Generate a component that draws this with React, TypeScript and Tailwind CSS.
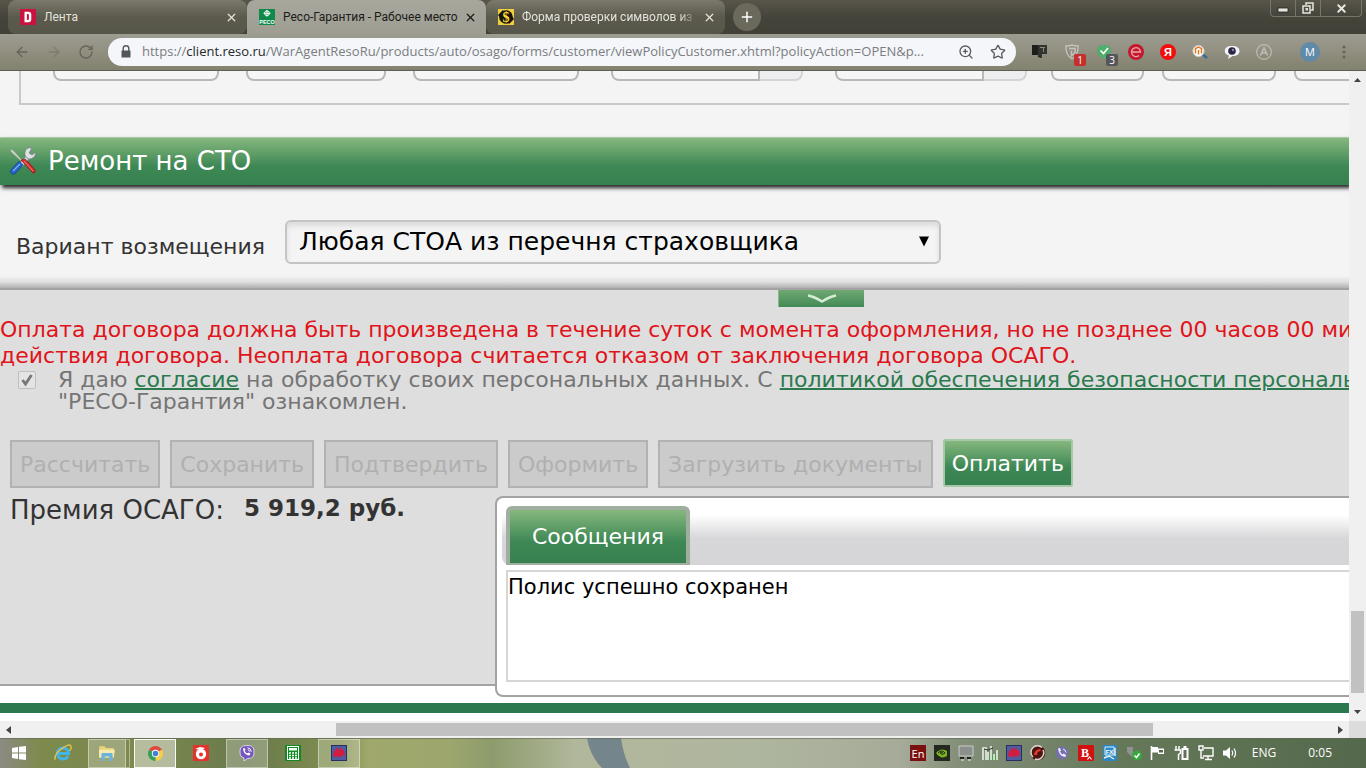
import React from "react";
import { ArrowLeft, ArrowRight, RotateCw, ZoomIn, Star, X, Plus } from "lucide-react";

type Kids = { children?: React.ReactNode };

function Ico({ children, size = 16 }: Kids & { size?: number }) {
  return (
    <svg width={size} height={size} viewBox="0 0 16 16" fill="none" aria-hidden="true" className="block shrink-0">
      {children}
    </svg>
  );
}

/* ---------- browser tabs ---------- */

function Tab({ icon, title, active, fade }: { icon: React.ReactNode; title: string; active?: boolean; fade?: boolean }) {
  return (
    <div
      className={
        active
          ? "flex h-[38px] w-[239px] shrink-0 items-center rounded-t-lg bg-linear-to-b from-[#a8a79d] to-[#9d9c91] pb-1 pl-3 pr-2 text-[#1c1c18]"
          : "flex h-[34px] w-[239px] shrink-0 items-center rounded-lg bg-linear-to-b from-[#7b796c] via-[#5b5a4c] to-[#57564a] pl-3 pr-2 text-[#e4e3dc]"
      }
    >
      {icon}
      <span
        className={
          fade
            ? "ml-2 min-w-0 flex-1 overflow-hidden whitespace-nowrap mask-r-from-90% font-[Roboto,sans-serif] text-xs"
            : "ml-2 min-w-0 flex-1 overflow-hidden whitespace-nowrap font-[Roboto,sans-serif] text-xs"
        }
      >
        {title}
      </span>
      <button aria-label="Закрыть вкладку" className="ml-1 flex size-4 items-center justify-center">
        <X size={13} strokeWidth={2.4} />
      </button>
    </div>
  );
}

function DIcon() {
  return (
    <Ico>
      <rect width="16" height="16" fill="#c9123f" />
      <path d="M4.5 2.8h3.8q3 0 3 3v4.4q0 3-3 3H4.500zM6.900 5v6h1q1 0 1-1V6q0-1-1-1z" fill="#fff" fillRule="evenodd" />
    </Ico>
  );
}

function ResoIcon() {
  return (
    <Ico>
      <rect width="16" height="16" fill="#0e8a4a" />
      <circle cx="8" cy="4.300" r="2.400" stroke="#fff" strokeWidth="1" />
      <path d="M8 1v6.600M4.500 4.300h7" stroke="#fff" strokeWidth="1" />
      <text x="8" y="14.500" textAnchor="middle" fontSize="5.500" fontWeight="700" fill="#fff" fontFamily="Liberation Sans, sans-serif">
        РЕСО
      </text>
    </Ico>
  );
}

function DollarIcon() {
  return (
    <Ico>
      <rect width="16" height="16" fill="#f0cf3c" />
      <circle cx="8" cy="8" r="6.800" fill="#17130a" />
      <path d="M0 6l5-5 1 4-3 5zM16 10l-5 5-1-4 3-5z" fill="#17130a" />
      <text x="8" y="13" textAnchor="middle" fontSize="14" fontWeight="700" fill="#ffd93b" fontFamily="Liberation Serif, serif">
        $
      </text>
    </Ico>
  );
}

function TabStrip() {
  return (
    <div className="flex h-[34px] shrink-0 items-start bg-linear-to-b from-[#58564b] via-[#45443a] to-[#424138] pl-2">
      <Tab icon={<DIcon />} title="Лента" />
      <Tab icon={<ResoIcon />} title="Ресо-Гарантия - Рабочее место" active />
      <Tab icon={<DollarIcon />} title="Форма проверки символов из д" fade />
      <button aria-label="Новая вкладка" className="ml-2 mt-[3px] flex size-7 items-center justify-center rounded-full bg-[#6a695c] text-white">
        <Plus size={16} strokeWidth={2.200} />
      </button>
      <div className="ml-auto mr-1 flex h-[17px] rounded-b-sm border border-t-0 border-[#77766b] text-[#e8e8e2]">
        <button aria-label="Свернуть" className="flex w-6 items-center justify-center">
          <svg width="12" height="12" viewBox="0 0 12 12"><rect x="1" y="6" width="10" height="4" fill="#e6e6df" stroke="#222" strokeWidth=".8" /></svg>
        </button>
        <button aria-label="Восстановить" className="flex w-[26px] items-center justify-center border-x border-[#77766b]">
          <svg width="12" height="12" viewBox="0 0 12 12" fill="none" stroke="#e6e6df" strokeWidth="1.500"><path d="M4 3V1h7v7H9" /><rect x="1" y="4" width="7" height="7" /><rect x="4" y="6.500" width="1.500" height="1.500" strokeWidth="1" /></svg>
        </button>
        <button aria-label="Закрыть" className="flex w-[40px] items-center justify-center">
          <X size={13} strokeWidth={3.500} />
        </button>
      </div>
    </div>
  );
}

/* ---------- toolbar ---------- */

function Extensions() {
  return (
    <div className="flex shrink-0 items-center gap-4 pl-4">
      <Ico>
        <path d="M0 1h9v13l-3-1v-2H0z" fill="#1d1d1b" />
        <path d="M6 1h9v9h-5v4L6 12z" fill="#34342f" />
        <path d="M8 3.500h5M11.500 4v4" stroke="#8b8a80" />
      </Ico>
      <span className="relative">
        <Ico>
          <path d="M8 .8c2 1 4 1.300 6.200 1.200 0 6-1 10-6.200 13C2.800 12 1.800 8 1.800 2 4 2.100 6 1.800 8 .8z" stroke="#c3c3bb" strokeWidth="1.300" />
          <path d="M5 4.500h6v4L7.500 12V6.500" stroke="#c3c3bb" strokeWidth="1.500" />
        </Ico>
        <span className="absolute left-2.5 top-2.5 flex h-3 w-3 items-center justify-center rounded-xs bg-[#c5302c] text-[10px] leading-3 text-white">1</span>
      </span>
      <span className="relative">
        <Ico>
          <path d="M1 6Q1 1 8 1t7 5q0 6-7 9-7-3-7-9z" fill="#4fae6a" />
          <path d="M4.500 6.500L7.500 9.500 12 4" stroke="#fff" strokeWidth="1.600" />
        </Ico>
        <span className="absolute left-2.5 top-2.5 flex h-3 w-3 items-center justify-center rounded-xs bg-[#55565a] text-[10px] leading-3 text-white">3</span>
      </span>
      <Ico>
        <circle cx="8" cy="8" r="8" fill="#c3182d" />
        <path d="M3.500 8H12.500A4.500 4.500 0 1 0 11 11.500" stroke="#eda6a8" strokeWidth="1.300" />
      </Ico>
      <Ico>
        <circle cx="8" cy="8" r="8" fill="#f40d0d" />
        <text x="8" y="12" textAnchor="middle" fontSize="11" fontWeight="700" fill="#fff" fontFamily="Liberation Sans, sans-serif">Я</text>
      </Ico>
      <Ico>
        <path d="M10 10l5 4" stroke="#35699c" strokeWidth="2.400" />
        <circle cx="6.500" cy="7" r="5.600" fill="#fff" stroke="#cfcdc4" />
        <path d="M3.500 9.500v-5l3-1.500 3 1.500v5M6.500 10.500V6" stroke="#e07b28" strokeWidth="1.500" />
      </Ico>
      <Ico>
        <path d="M8 2c5 0 7.500 2 7.500 5S13 12 8.500 12L4 15l1-3.500C2 11 .8 9 .8 7 .8 4 3 2 8 2z" fill="#f3f3f5" />
        <circle cx="8" cy="7" r="3.800" fill="#2a2748" />
        <circle cx="9" cy="6" r="1.200" fill="#8b87a8" />
      </Ico>
      <Ico>
        <circle cx="8" cy="8" r="7.300" stroke="#bdbcb3" strokeWidth="1.200" />
        <path d="M4.500 11.500L8 4l3.500 7.500M6 9h4" stroke="#bdbcb3" strokeWidth="1.700" />
      </Ico>
      <div className="ml-3 flex size-5 items-center justify-center rounded-full bg-[#5f8aa8] text-[11px] text-white">М</div>
      <svg width="16" height="16" viewBox="0 0 16 16" fill="#66655a" aria-hidden="true"><circle cx="8" cy="3" r="1.600" /><circle cx="8" cy="8" r="1.600" /><circle cx="8" cy="13" r="1.600" /></svg>
    </div>
  );
}

function Toolbar() {
  return (
    <div className="flex h-[37px] shrink-0 items-center border-b border-[#5f5e52] bg-linear-to-b from-[#9d9c91] to-[#83826f] pr-3.5">
      <div className="flex w-[108px] items-center gap-4 pl-3.5 text-[#65645a]">
        <button aria-label="Назад"><ArrowLeft size={16} strokeWidth={2} /></button>
        <button aria-label="Вперёд" className="text-[#7d7c70]"><ArrowRight size={16} strokeWidth={2} /></button>
        <button aria-label="Обновить"><RotateCw size={16} strokeWidth={2} /></button>
      </div>
      <div className="flex h-7 min-w-0 flex-1 items-center rounded-full bg-[#f4f6f9] px-2.5 text-[#5a5b5e]">
        <Ico>
          <path d="M4 6.500h8q.5 0 .5.5v6.500H3.500V7q0-.5.5-.5z" fill="#55565a" />
          <path d="M5.200 7V4.500a2.800 2.800 0 0 1 5.600 0V7" stroke="#55565a" strokeWidth="1.400" />
        </Ico>
        <div className="ml-2 min-w-0 flex-1 overflow-hidden text-ellipsis whitespace-nowrap text-[13px] text-[#7a7c80]">
          https://<span className="text-[#26272a]">client.reso.ru</span>/WarAgentResoRu/products/auto/osago/forms/customer/viewPolicyCustomer.xhtml?policyAction=OPEN&amp;p...
        </div>
        <button aria-label="Масштаб" className="ml-3"><ZoomIn size={16} strokeWidth={2} /></button>
        <button aria-label="В закладки" className="ml-4"><Star size={16} strokeWidth={2} /></button>
      </div>
      <Extensions />
    </div>
  );
}

/* ---------- page ---------- */

const inputBox = "h-[10px] shrink-0 rounded-b-lg border-2 border-t-0 border-[#b9b9b9] bg-[#f6f6f6]";

function InputRow() {
  return (
    <div className="ml-[19px] flex h-[34px] shrink-0 border-b-2 border-l-2 border-[#c9c9c9] pl-8">
      <input aria-label="Поле 1" className={inputBox + " mr-[27px] w-[166px]"} />
      <input aria-label="Поле 2" className={inputBox + " mr-[27px] w-[140px]"} />
      <input aria-label="Поле 3" className={inputBox + " mr-8 w-[166px]"} />
      <input aria-label="Дата 1" className="h-[10px] w-[149px] shrink-0 rounded-bl-lg border-2 border-t-0 border-[#b9b9b9] bg-[#f6f6f6]" />
      <button aria-label="Календарь 1" className="mr-8 h-[10px] w-[43px] shrink-0 rounded-br-lg border-2 border-l-0 border-t-0 border-[#d4d4d6] bg-[#eeeef1]" />
      <input aria-label="Дата 2" className="h-[10px] w-[149px] shrink-0 rounded-bl-lg border-2 border-t-0 border-[#b9b9b9] bg-[#f6f6f6]" />
      <button aria-label="Календарь 2" className="mr-6 h-[10px] w-[43px] shrink-0 rounded-br-lg border-2 border-l-0 border-t-0 border-[#d4d4d6] bg-[#eeeef1]" />
      <input aria-label="Поле 4" className={inputBox + " mr-[18px] w-[93px]"} />
      <input aria-label="Поле 5" className={inputBox + " mr-[18px] w-[114px]"} />
      <input aria-label="Поле 6" className={inputBox + " w-[160px]"} />
    </div>
  );
}

function ToolsIcon() {
  return (
    <svg width="30" height="30" viewBox="0 0 30 30" fill="none" aria-hidden="true">
      <path d="M2 2l3 1 9 10-1 1L3 5z" fill="#c9d6c4" stroke="#7c8f78" strokeWidth=".6" />
      <path d="M15 14l3-2 9 11q1 3-2 3z" fill="#cf2f2c" stroke="#8f1d20" strokeWidth=".6" />
      <path d="M17 15l8 10" stroke="#f08a80" strokeWidth="1" />
      <path d="M11 17L19 8l3 3-8 9z" fill="#c9cdd2" stroke="#70767c" strokeWidth=".6" />
      <path d="M24 1q-6-1-7 4t4 7q6 0 7-7l-4 3-3-2z" fill="#dfe2e6" stroke="#7d8388" strokeWidth=".8" />
      <path d="M13 13l4-1 10 11q1 3-2 3z" fill="#cf2f2c" stroke="#8f1d20" strokeWidth=".6" />
      <path d="M16 14l9 10" stroke="#f08a80" strokeWidth="1" />
      <path d="M2 24l9-10 4 4-8 9q-4 1-5-3z" fill="#2463c4" stroke="#143f86" strokeWidth=".6" />
      <path d="M5 24l7-7" stroke="#7fb0ef" strokeWidth="1.200" />
    </svg>
  );
}

function CompensationRow() {
  return (
    <div className="flex h-[103px] shrink-0 flex-col">
      <div className="flex flex-1 items-start pl-4 pt-[35px]">
        <label htmlFor="variant" className="w-[269px] shrink-0 pt-[13px] text-[22px] leading-7 whitespace-nowrap text-[#333]">
          Вариант возмещения
        </label>
        <div className="relative w-[656px]">
          <select
            id="variant"
            className="block h-11 w-full appearance-none rounded-md border-2 border-[#c4c4c4] bg-[#f4f4f4] pl-3 text-[25px] leading-9 text-black shadow-[inset_0_4px_5px_#dcdcdc]"
          >
            <option>Любая СТОА из перечня страховщика</option>
          </select>
          <svg className="pointer-events-none absolute right-3 top-4" width="10" height="11" viewBox="0 0 10 11" aria-hidden="true"><path d="M0 .5h10L5 10.500z" fill="#000" /></svg>
        </div>
      </div>
      <div className="h-3 bg-linear-to-b from-[#f4f4f4] via-[#dedede] to-[#b0b0b0]" />
    </div>
  );
}

function ActionButton({ children }: Kids) {
  return (
    <button disabled className="h-12 shrink-0 border-2 border-[#b2b2b2] bg-[#cbcbcb] px-2 text-[22px] whitespace-nowrap text-[#b0b0b0]">
      {children}
    </button>
  );
}

const greenFill = "bg-linear-to-b from-[#85b77e] via-[#3d8855] via-60% to-[#37804f]";

function BottomPanel() {
  return (
    <div className="flex h-[398px] shrink-0 flex-col border-y-2 border-[#a3a3a3] bg-[#dedede]">
      <button aria-label="Свернуть панель" className="ml-[778px] flex h-[17px] w-[86px] shrink-0 items-center justify-center border-l border-[#8cb78e] bg-linear-to-b from-[#6fa871] to-[#428a58]">
        <svg width="30" height="9" viewBox="0 0 30 9" fill="none" aria-hidden="true"><path d="M1 1.500q6 1 14 6 8-5 14-6" stroke="#d5ecd5" strokeWidth="2.500" /></svg>
      </button>
      <p className="mt-2.5 shrink-0 text-[22px] leading-[26px] whitespace-nowrap text-[#e0141a]">
        Оплата договора должна быть произведена в течение суток с момента оформления, но не позднее 00 часов 00 минут
        <br />
        действия договора. Неоплата договора считается отказом от заключения договора ОСАГО.
      </p>
      <div className="flex shrink-0 items-start">
        <div className="relative ml-[18px] mt-0.5 size-[18px] shrink-0">
          <input id="agree" type="checkbox" defaultChecked disabled className="block size-full appearance-none rounded-xs border border-[#bebebe] bg-[#e4e4e4]" />
          <svg className="pointer-events-none absolute inset-0" width="18" height="18" viewBox="0 0 18 18" fill="none" aria-hidden="true"><path d="M4.500 9l3 4 6-9" stroke="#777" strokeWidth="2.800" /></svg>
        </div>
        <label htmlFor="agree" className="ml-[22px] text-[22px] leading-[22px] whitespace-nowrap text-[#757575]">
          Я даю <a href="#consent" className="text-[#2b7a4e] underline decoration-2">согласие</a> на обработку своих персональных данных. С{" "}
          <a href="#policy" className="text-[#2b7a4e] underline decoration-2">политикой обеспечения безопасности персональных данных</a>
          <br />
          "РЕСО-Гарантия" ознакомлен.
        </label>
      </div>
      <div className="mt-[27px] flex shrink-0 gap-2.5 pl-2.5">
        <ActionButton>Рассчитать</ActionButton>
        <ActionButton>Сохранить</ActionButton>
        <ActionButton>Подтвердить</ActionButton>
        <ActionButton>Оформить</ActionButton>
        <ActionButton>Загрузить документы</ActionButton>
        <button className={greenFill + " -mt-px h-12 shrink-0 rounded-xs border-2 border-[#a5c8a8] px-[7px] text-[22px] text-white"}>Оплатить</button>
      </div>
      <div className="mt-2 flex items-start">
        <div className="flex w-[495px] shrink-0 items-start gap-5 pl-2.5 text-[#333]">
          <span className="text-[26px] leading-7">Премия ОСАГО:</span>
          <b className="text-[23px] leading-6">5 919,2 руб.</b>
        </div>
        <MessagesPanel />
      </div>
    </div>
  );
}

function MessagesPanel() {
  return (
    <section className="relative h-[201px] min-w-0 flex-1 rounded-l-lg border-2 border-r-0 border-[#a3a3a3] bg-white pl-[5px] pt-2">
      <div className="flex h-[59px] rounded-l-lg bg-linear-to-b from-white from-15% via-[#d7d7d9] via-55% to-[#d5d5d8] pl-1">
        <button className={greenFill + " h-[59px] rounded-t-md border-4 border-b-2 border-[#9fae9f] px-[22px] text-[22px] text-white"}>Сообщения</button>
      </div>
      <div className="ml-1 mt-[5px] h-[112px] border-2 border-r-0 border-[#d5d5d3] bg-white text-[21px] leading-[30px] text-black">
        Полис успешно сохранен
      </div>
    </section>
  );
}

function Page() {
  return (
    <main className="flex min-w-0 flex-1 flex-col overflow-hidden bg-[#f4f4f4] font-['DejaVu_Sans',sans-serif]">
      <InputRow />
      <h2 className={greenFill + " z-10 mt-8 flex h-12 shrink-0 items-center border-t border-[#a9cba5] pl-2 text-[26px] text-white shadow-[2px_3px_4px_#222]"}>
        <ToolsIcon />
        <span className="ml-2.5">Ремонт на СТО</span>
      </h2>
      <CompensationRow />
      <BottomPanel />
      <footer className="flex flex-1 flex-col bg-white pt-[17px]">
        <div className="h-2.5 bg-[#2b774e]" />
      </footer>
    </main>
  );
}

function VerticalBar() {
  return (
    <div className="flex w-[17px] shrink-0 flex-col items-center bg-[#f0f0f0] py-1.5">
      <svg width="7" height="6" viewBox="0 0 7 6" aria-hidden="true"><path d="M0 5l3.500-4L7 5z" fill="#444" /></svg>
      <div className="flex-1" />
      <div className="h-[82px] w-[13px] bg-[#c1c1c1]" />
      <svg className="mt-4" width="7" height="6" viewBox="0 0 7 6" aria-hidden="true"><path d="M0 1l3.500 4L7 1z" fill="#444" /></svg>
    </div>
  );
}

function HorizontalBar() {
  return (
    <div className="flex h-[17px] shrink-0 bg-[#dcdcdc]">
      <div className="flex flex-1 items-center bg-[#f0f0f0] px-1.5">
        <svg width="5" height="8" viewBox="0 0 5 8" aria-hidden="true"><path d="M5 0L0 4l5 4z" fill="#444" /></svg>
        <div className="ml-[24.3%] h-[13px] w-[61.1%] bg-[#c1c1c1]" />
        <svg className="ml-auto" width="5" height="8" viewBox="0 0 5 8" aria-hidden="true"><path d="M0 0l5 4-5 4z" fill="#444" /></svg>
      </div>
      <div className="w-[17px]" />
    </div>
  );
}

/* ---------- taskbar ---------- */

function TaskButton({ children, name, look = "plain" }: Kids & { name: string; look?: "plain" | "open" | "active" }) {
  const looks = {
    plain: "border-transparent",
    open: "border-white/40 bg-white/25",
    active: "border-white/90 bg-white/45",
  };
  return (
    <button aria-label={name} className={"flex h-[29px] w-[42px] shrink-0 items-center justify-center border " + looks[look]}>
      {children}
    </button>
  );
}

function SplatIcon() {
  return (
    <Ico>
      <rect x=".5" y=".5" width="15" height="15" fill="#4f5ca0" stroke="#27305f" />
      <path d="M2 11l1-5 2-1 1-3 2 3 2-3 1 3 2 0 1 6-2-1-1 2-2-1-1 2-2-2-2 1z" fill="#d31c3f" />
    </Ico>
  );
}

function Taskbar() {
  return (
    <div className="relative flex h-[30px] shrink-0 items-center justify-between overflow-hidden text-white">
      <svg className="absolute inset-0 size-full" viewBox="0 0 1366 30" preserveAspectRatio="none" aria-hidden="true">
        <defs>
          <linearGradient id="desk" x1="0" x2="1" y1="0" y2="0">
            <stop offset="0" stopColor="#8c8b83" />
            <stop offset=".03" stopColor="#7d8a4d" />
            <stop offset=".11" stopColor="#7b884f" />
            <stop offset=".18" stopColor="#68794c" />
            <stop offset=".25" stopColor="#82904f" />
            <stop offset=".27" stopColor="#a0a86c" />
            <stop offset=".33" stopColor="#9ca66d" />
            <stop offset=".36" stopColor="#8d9b6c" />
            <stop offset=".42" stopColor="#b0b79a" />
            <stop offset=".55" stopColor="#afb69f" />
            <stop offset=".66" stopColor="#a5ab98" />
            <stop offset=".7" stopColor="#84907a" />
            <stop offset=".82" stopColor="#65785a" />
            <stop offset="1" stopColor="#54694b" />
          </linearGradient>
        </defs>
        <rect width="1366" height="30" fill="url(#desk)" />
        <path d="M587 0h34q2 16 9 30h-28q-12-12-15-30z" fill="#75858c" />
        <path d="M0 .5h1366" stroke="#5c6650" strokeOpacity=".6" />
      </svg>
      <div className="relative flex items-center gap-1">
        <button aria-label="Пуск" className="flex w-[38px] items-center justify-center">
          <Ico><path d="M1 3l6-1v5.500H1zM8 1.800L15 1v6.500H8zM1 8.500h6V14l-6-1zM8 8.500h7V15l-7-.8z" fill="#fff" /></Ico>
        </button>
        <TaskButton name="Internet Explorer">
          <Ico size={18}>
            <path d="M3 8.500h10A5 5 0 0 0 3 8.500a5 5 0 0 0 9.500 2" stroke="#44b3e6" strokeWidth="2.600" />
            <path d="M1 14Q0 9 7 4t8-2q1 1-1 4" stroke="#e4c64c" strokeWidth="1.200" />
          </Ico>
        </TaskButton>
        <div className="flex">
          <button aria-label="Проводник" className="flex h-[29px] w-[38px] items-center justify-center border border-white/40 bg-white/25">
            <Ico size={18}>
              <path d="M1 2h5l1 1.500h7V12H1z" fill="#e8d27a" />
              <path d="M1 5h14l-1 7H1z" fill="#f7ebae" />
              <path d="M3 15V9q0-1 1-1h8q1 0 1 1v6h-3v-4H6v4z" fill="#6bb4dc" />
            </Ico>
          </button>
          <div className="h-[29px] w-1 border border-l-0 border-white/40" />
        </div>
        <TaskButton name="Google Chrome" look="active">
          <Ico size={15}>
            <path d="M8 8L1.100 4A8 8 0 0 1 14.900 4z" fill="#dd4b3e" />
            <path d="M8 8L14.900 4A8 8 0 0 1 8 16z" fill="#f6cf46" />
            <path d="M8 8v8A8 8 0 0 1 1.100 4z" fill="#35a058" />
            <circle cx="8" cy="8" r="3.900" fill="#fff" />
            <circle cx="8" cy="8" r="3" fill="#4380dc" />
          </Ico>
        </TaskButton>
        <TaskButton name="Запись экрана">
          <Ico>
            <rect width="16" height="16" rx="1" fill="#e2342d" />
            <circle cx="8" cy="9" r="5.200" fill="#fff" />
            <circle cx="8" cy="9.500" r="2" fill="#e2342d" />
            <path d="M2 4l5-2 5 1-3 2z" fill="#fff" />
          </Ico>
        </TaskButton>
        <TaskButton name="Viber" look="open">
          <Ico>
            <path d="M8 .5c5.500 0 7 2 7 6.500s-1.500 6.500-6.500 6.500L5 16v-3C2 12 1 10.500 1 7 1 2.500 2.500.5 8 .5z" fill="#7556bd" stroke="#eee9fb" strokeWidth=".8" />
            <path d="M4 4q0-1 1.200-1.200l1.300 2-.8 1q.8 2 2.500 2.600l1-1 2.200 1.200q0 1.800-1.500 1.800Q5 10 4 4z" fill="#fff" />
            <path d="M8.500 2.800q3.500.2 3.800 4M8.800 4.800q1.500.2 1.700 1.700" stroke="#fff" />
          </Ico>
        </TaskButton>
        <TaskButton name="Калькулятор">
          <Ico>
            <rect width="16" height="16" fill="#118a24" />
            <rect x="2.500" y="1.500" width="11" height="13" stroke="#fff" />
            <rect x="4" y="3" width="8" height="2.500" fill="#fff" />
            <path d="M4 8h8M4 10.500h8M4 13h8" stroke="#fff" strokeWidth="1.500" strokeDasharray="2 1" />
          </Ico>
        </TaskButton>
        <TaskButton name="Клиент" look="open"><SplatIcon /></TaskButton>
      </div>
      <div className="relative flex items-center gap-2 pr-[34px]">
        <Ico>
          <rect width="16" height="16" fill="#7c1010" />
          <text x="8" y="12.500" textAnchor="middle" fontSize="11" fill="#fff" fontFamily="Open Sans, sans-serif">En</text>
        </Ico>
        <Ico>
          <rect width="16" height="16" fill="#24291f" />
          <path d="M2 8q5-6 11-2v5q-6 4-11-3z" fill="#79b51c" />
          <path d="M4 8q4-4 7 0-3 3-5 0 2-1.500 3 0" stroke="#24291f" />
        </Ico>
        <Ico>
          <path d="M1 11V1h14v10z" fill="#8d8f8c" stroke="#c9cac4" />
          <path d="M2 13h4M9 13h4" stroke="#222" strokeWidth="2" />
          <path d="M3 15h3M10 15h3" stroke="#eee" />
        </Ico>
        <Ico>
          <path d="M1 15V3h3v12M6 15V7M9 15V1M12 15V9M15 15V5" stroke="#e9f2e6" strokeWidth="1.600" />
          <path d="M7.500 15v-5M10.500 15v-4M13.500 15v-6" stroke="#4c9d48" />
          <path d="M2 4l4 1 5-2" stroke="#333" />
        </Ico>
        <SplatIcon />
        <Ico>
          <circle cx="8" cy="8" r="7.300" fill="#4c1411" />
          <path d="M3 12A6.500 6.500 0 0 1 12 2.500M13 5A6.500 6.500 0 0 1 5 14" stroke="#dcd2cc" strokeWidth="1.600" />
          <path d="M4 10q0-5 6-6l1 2q-4 0-4 4z" fill="#e23c28" />
        </Ico>
        <Ico>
          <circle cx="8" cy="8" r="6.500" fill="#7670ad" />
          <path d="M4 3.500l2-.5 1 2.500-1 1q1 2 2.500 3l1-1 2.500 1.500-.5 2Q5 11.500 4 3.500z" fill="#f0edff" />
          <path d="M9 4q2.500.5 3 3.500" stroke="#f0edff" />
        </Ico>
        <Ico>
          <rect width="16" height="16" rx="1" fill="#d21111" />
          <text x="7" y="12" textAnchor="middle" fontSize="12" fontWeight="700" fill="#fff" fontFamily="Liberation Serif, serif">B</text>
          <path d="M9.500 14.500l2-2.500 2 2.500" stroke="#fff" strokeWidth="1.200" />
        </Ico>
        <Ico>
          <rect x="1" width="14" height="16" rx="1" fill="#2c87c6" />
          <path d="M3 2h9v8H3z" stroke="#d8f0ff" />
          <text x="7.500" y="8.500" textAnchor="middle" fontSize="6" fontWeight="700" fill="#fff" fontFamily="Liberation Sans, sans-serif">FX</text>
          <path d="M2 13l5-2 5 3M13 3v8" stroke="#e8f5e2" strokeWidth="1.400" />
        </Ico>
        <Ico>
          <path d="M1 2h6v5q3 1 3 4-3 2-5 0L1 7z" fill="#8f928e" />
          <circle cx="11" cy="10.500" r="5" fill="#35a83e" />
          <path d="M8.500 10.500l2 2 3-4" stroke="#fff" strokeWidth="1.500" />
        </Ico>
        <Ico>
          <path d="M1.500 1v14" stroke="#fff" strokeWidth="1.600" />
          <path d="M2 2h6v1.500h6V9H8V7.500H2z" fill="#fff" />
          <path d="M9 5h4v2.500H9z" fill="#59674e" />
        </Ico>
        <Ico>
          <path d="M2 1v4M5 1v4M.5 5h6v3l-2 1.500V15" stroke="#fff" strokeWidth="1.500" />
          <rect x="7.500" y="3" width="7" height="12" fill="#fff" />
          <rect x="9.500" y="5" width="3" height="8" fill="#65725a" />
          <path d="M9.500 2h3" stroke="#fff" strokeWidth="2" />
        </Ico>
        <Ico>
          <path d="M6 3h9v8H5M10 11v3M7 14.500h7" stroke="#fff" strokeWidth="1.400" />
          <path d="M1 1h4v4H1zM3 5v8h3" stroke="#fff" strokeWidth="1.400" />
        </Ico>
        <Ico>
          <path d="M1 5.500h3L8 2v12l-4-3.500H1z" fill="#fff" />
          <path d="M10 5.500q1.500 2.500 0 5M12 3.500q3 4.500 0 9" stroke="#fff" strokeWidth="1.200" />
        </Ico>
        <span className="ml-1.5 text-xs">ENG</span>
        <time className="ml-6 text-xs">0:05</time>
      </div>
    </div>
  );
}

export default function App() {
  return (
    <div className="flex h-screen flex-col overflow-hidden font-['Open_Sans','Noto_Sans',sans-serif]">
      <TabStrip />
      <Toolbar />
      <div className="flex min-h-0 flex-1">
        <Page />
        <VerticalBar />
      </div>
      <HorizontalBar />
      <Taskbar />
    </div>
  );
}
